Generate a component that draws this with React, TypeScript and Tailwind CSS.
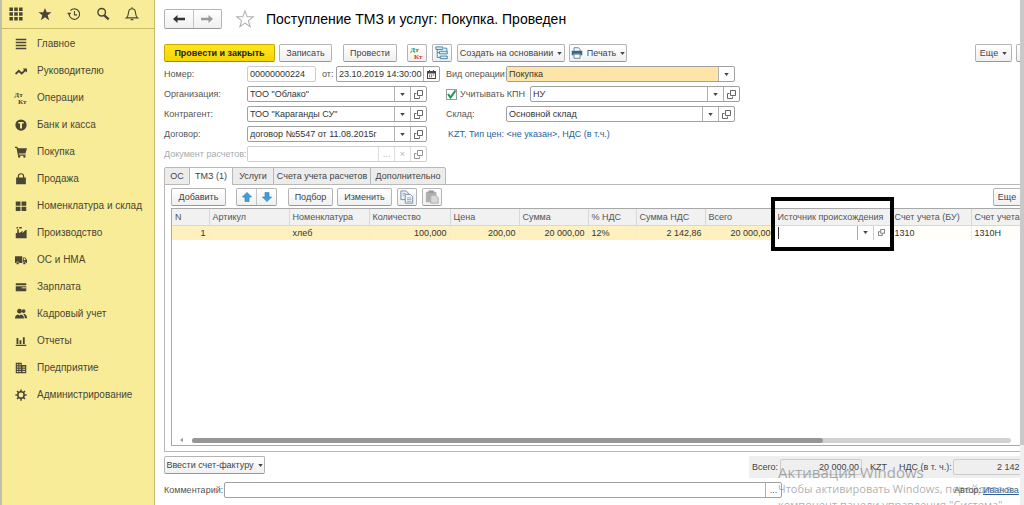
import React from 'react';

type Kids = { children?: React.ReactNode };

const Svg = ({ children, className = 'size-3.5', box = 16 }: Kids & { className?: string; box?: number }) => (
  <svg viewBox={`0 0 ${box} ${box}`} className={`shrink-0 overflow-visible ${className}`} fill="currentColor" aria-hidden="true">
    {children}
  </svg>
);

const DtKt = ({ colored = false, className = 'size-3.5' }: { colored?: boolean; className?: string }) => (
  <Svg className={className}>
    <text x="-1" y="7" fontSize="9.500" fontWeight="bold" fontFamily="Liberation Serif, serif" fill={colored ? '#2b8a2b' : 'currentColor'}>Дт</text>
    <text x="4" y="15.500" fontSize="9.500" fontWeight="bold" fontFamily="Liberation Serif, serif" fill={colored ? '#d83a34' : 'currentColor'}>Кт</text>
  </Svg>
);

const sections: { label: string; icon: React.ReactNode }[] = [
  { label: 'Главное', icon: <Svg className="size-3"><path d="M1 1h14v2H1zM1 5h14v2H1zM1 9h14v2H1zM1 13h14v2H1z" /></Svg> },
  { label: 'Руководителю', icon: <Svg className="size-3"><path d="M0 11l5-5 4 3.500 3-3L10.500 4.500H16V10l-2-1.700L9 13 5 9.500 1.500 13z" /></Svg> },
  { label: 'Операции', icon: <DtKt className="size-3" /> },
  { label: 'Банк и касса', icon: <Svg className="size-3"><circle cx="8" cy="8" r="7.500" /><path d="M4.500 4h7v2H9.300v6.500H6.700V6H4.500z" fill="#f9ec98" /></Svg> },
  { label: 'Покупка', icon: <Svg className="size-3"><path d="M0 1h3l1 2h12l-2 7H5l.4 1.300H14V13H4L2 2.500H0z" /><circle cx="5.500" cy="14.300" r="1.500" /><circle cx="12.500" cy="14.300" r="1.500" /></Svg> },
  { label: 'Продажа', icon: <Svg className="size-3"><path d="M1.500 6h13v9h-13z" /><path d="M4.500 8V4.500a3.500 3.500 0 0 1 7 0V8" fill="none" stroke="currentColor" strokeWidth="1.500" /></Svg> },
  { label: 'Номенклатура и склад', icon: <Svg className="size-3"><path d="M1 2h6.300v5.500H1zM8.700 2H15v5.500H8.700zM1 9h6.300v5.500H1zM8.700 9H15v5.500H8.700z" /></Svg> },
  { label: 'Производство', icon: <Svg className="size-3"><path d="M1 15V8h2V3h2v3.500l1 1.500 4-3v3l4-4 1.500 0V15zM2 0h2v2H2zM5.500 0H9v2H5.500z" /></Svg> },
  { label: 'ОС и НМА', icon: <Svg className="size-3"><path d="M0 3h9.500v9H0zM10.300 4.500h3.500L16 8v4h-5.700z" /><path d="M11.500 5.700h1.700L14.500 8h-3z" fill="#f9ec98" /><circle cx="3.500" cy="12.200" r="1.900" stroke="#f9ec98" strokeWidth=".7" /><circle cx="12.500" cy="12.200" r="1.900" stroke="#f9ec98" strokeWidth=".7" /></Svg> },
  { label: 'Зарплата', icon: <Svg className="size-3"><path d="M1 3h14v2.500H1zM1 7h14v6.500H1z" /><path d="M9 8.500h6v1.200H9z" fill="#f9ec98" /></Svg> },
  { label: 'Кадровый учет', icon: <Svg className="size-3"><circle cx="6" cy="4.200" r="3.200" /><path d="M0 14c0-4 2-5 4-5.500l2 1.500 2-1.500c2 .5 4 1.500 4 5.500z" /><circle cx="11.500" cy="4" r="2.500" /><path d="M10.500 7.500c4 0 5.500 2 5.500 6h-3c0-3-1-4.500-2.500-6z" /></Svg> },
  { label: 'Отчеты', icon: <Svg className="size-3"><path d="M1 13h14v1.500H1zM2 4h2.500v8H2zM6 7h2.500v5H6zM10.500 3H13v9h-2.500z" /></Svg> },
  { label: 'Предприятие', icon: <Svg className="size-3"><path fillRule="evenodd" d="M1 1h8v3h6v11H1zM2.500 3v1.200h2V3zm3.200 0v1.200h2V3zM2.500 6v1.200h2V6zm3.200 0v1.200h2V6zM2.500 9v1.200h2V9zm3.200 0v1.200h2V9zM2.500 12v1.200h2V12zm3.200 0v1.200h2V12zM10 6v1.200h3.500V6zm0 3v1.200h3.500V9zm0 3v1.200h3.500V12z" /></Svg> },
  {
    label: 'Администрирование',
    icon: (
      <Svg className="size-3">
        <circle cx="8" cy="8" r="4.200" fill="none" stroke="currentColor" strokeWidth="2" />
        <path d="M8 .5v3M8 12.500v3M.5 8h3M12.500 8h3M2.700 2.700l2 2M11.300 11.300l2 2M2.700 13.300l2-2M11.300 4.700l2-2" stroke="currentColor" strokeWidth="2" />
      </Svg>
    ),
  },
];

const Caret = () => (
  <svg viewBox="0 0 6 4" className="h-[3px] w-[5px] shrink-0" fill="#444" aria-hidden="true"><path d="M0 0h6L3 4z" /></svg>
);

const OpenIcon = () => (
  <svg viewBox="0 0 9 9" className="size-[9px] shrink-0" fill="none" stroke="#666" aria-hidden="true">
    <path d="M3.500 .5h5v5h-5zM2.500 3.500h-2v5h5v-2" />
  </svg>
);

const Btn = ({ children, className = '', label }: Kids & { className?: string; label?: string }) => (
  <button
    type="button"
    aria-label={label}
    className={`flex h-[18px] shrink-0 items-center justify-center gap-1 whitespace-nowrap rounded-[2px] border border-[#b4b4b4] border-b-[#989898] bg-linear-to-b from-white to-[#f0f0f0] text-[#444] ${className}`}
  >
    {children}
  </button>
);

type FieldProps = {
  id: string;
  value: string;
  className?: string;
  inputClass?: string;
  tools?: ('drop' | 'open' | 'dots' | 'clear' | 'calendar')[];
  muted?: boolean;
  label?: string;
};

const toolNames = { drop: 'Выбрать из списка', open: 'Открыть', dots: 'Выбрать', clear: 'Очистить', calendar: 'Календарь' };

const Field = ({ id, value, className = '', inputClass = '', tools = [], muted, label }: FieldProps) => (
  <div className={`flex h-4 overflow-hidden rounded-[2px] border bg-white ${muted ? 'border-[#d0d0d0]' : 'border-[#a0a0a0]'} ${className}`}>
    <input id={id} aria-label={label} defaultValue={value} disabled={muted} className={`min-w-0 flex-1 pl-0.5 text-[#333] outline-none ${inputClass}`} />
    {tools.map((t) => (
      <button
        key={t}
        type="button"
        aria-label={toolNames[t]}
        className={`flex w-4 shrink-0 items-center justify-center border-l ${muted ? 'border-[#d0d0d0] text-[#999] opacity-70' : 'border-[#b0b0b0] text-[#555]'}`}
      >
        {t === 'drop' && <Caret />}
        {t === 'open' && <OpenIcon />}
        {t === 'dots' && '...'}
        {t === 'clear' && '×'}
        {t === 'calendar' && (
          <svg viewBox="0 0 9 9" className="size-[9px]" fill="#444" aria-hidden="true">
            <path fillRule="evenodd" d="M0 1h2V0h1v1h3V0h1v1h2v8H0zM1 3.500V8h7V3.500z" />
            <path d="M2 4.500h1.200v1H2zM4 4.500h1.200v1H4zM6 4.500h1.200v1H6zM2 6.300h1.200v1H2zM4 6.300h1.200v1H4z" />
          </svg>
        )}
      </button>
    ))}
  </div>
);

const Row = ({ id, label, muted, children }: Kids & { id: string; label: string; muted?: boolean }) => (
  <div className="flex h-4 items-center">
    <label htmlFor={id} className={`w-[83px] shrink-0 whitespace-nowrap ${muted ? 'text-[#aaa]' : ''}`}>{label}</label>
    {children}
  </div>
);

const columns: { name: string; value: string; width: string; right?: boolean }[] = [
  { name: 'N', value: '1', width: 'w-[37px]', right: true },
  { name: 'Артикул', value: '', width: 'w-20' },
  { name: 'Номенклатура', value: 'хлеб', width: 'w-20' },
  { name: 'Количество', value: '100,000', width: 'w-[81px]', right: true },
  { name: 'Цена', value: '200,00', width: 'w-[69px]', right: true },
  { name: 'Сумма', value: '20 000,00', width: 'w-[69px]', right: true },
  { name: '% НДС', value: '12%', width: 'w-12' },
  { name: 'Сумма НДС', value: '2 142,86', width: 'w-[69px]', right: true },
  { name: 'Всего', value: '20 000,00', width: 'w-[69px]', right: true },
  { name: 'Источник происхождения', value: '', width: 'w-[117px]' },
  { name: 'Счет учета (БУ)', value: '1310', width: 'w-20' },
  { name: 'Счет учета (НУ)', value: '1310Н', width: 'w-20' },
];

const tabs = [
  { name: 'ОС', width: 'w-6' },
  { name: 'ТМЗ (1)', width: 'w-[42px]', active: true },
  { name: 'Услуги', width: 'w-10' },
  { name: 'Счета учета расчетов', width: 'w-24' },
  { name: 'Дополнительно', width: 'w-[74px]' },
];

const Sidebar = () => (
  <aside className="w-[155px] shrink-0 border-r border-l-2 border-r-[#c9bd70] border-l-[#bfc0a8] bg-[#f9ec98] text-[#4a4636]">
    <div className="flex h-[29px] items-center gap-[15px] border-b border-[#cbbb66] pb-px pl-[7px]">
      <button type="button" aria-label="Меню"><Svg><path d="M.5 .5h4v4h-4zM6 .5h4v4H6zM11.500 .5h4v4h-4zM.5 6h4v4h-4zM6 6h4v4H6zM11.500 6h4v4h-4zM.5 11.500h4v4h-4zM6 11.500h4v4H6zM11.500 11.500h4v4h-4z" /></Svg></button>
      <button type="button" aria-label="Избранное"><Svg><path d="M8 1l2 5h5.500l-4.400 3.400L12.700 15 8 11.700 3.300 15l1.600-5.600L.5 6H6z" /></Svg></button>
      <button type="button" aria-label="История">
        <Svg><path d="M2.500 9A6 6 0 1 0 4 4" fill="none" stroke="currentColor" strokeWidth="1.300" /><path d="M0 6.500h5L2.500 9.800z" /><path d="M8.500 4.500V9h3" fill="none" stroke="currentColor" strokeWidth="1.200" /></Svg>
      </button>
      <button type="button" aria-label="Поиск"><Svg><circle cx="6.500" cy="6" r="4.300" fill="none" stroke="currentColor" strokeWidth="1.600" /><path d="M9.500 9.500l5 4.700" stroke="currentColor" strokeWidth="2.600" /></Svg></button>
      <button type="button" aria-label="Уведомления"><Svg><path d="M1.500 12.500c2-1.500 2.300-3.500 2.500-6 .2-2.700 1.700-4.500 4-4.500s3.800 1.800 4 4.500c.2 2.500.5 4.500 2.500 6zM8 .3V2M6.500 14.500h3" fill="none" stroke="currentColor" strokeWidth="1.300" /></Svg></button>
    </div>
    <nav className="pt-px text-[10px]">
      {sections.map((s) => (
        <a key={s.label} href="#" className="flex h-[27px] items-center gap-2.5 whitespace-nowrap pl-[13px]">
          {s.icon}
          {s.label}
        </a>
      ))}
    </nav>
  </aside>
);

const Arrow = ({ className }: { className: string }) => (
  <svg viewBox="0 0 12 8" className={`h-2 w-3 ${className}`} fill="currentColor" aria-hidden="true"><path d="M4.500 0L0 4l4.500 4V5.200H12V2.800H4.500z" /></svg>
);

const BlueArrow = ({ down = false }: { down?: boolean }) => (
  <svg viewBox="0 0 10 10" className={`size-2.5 ${down ? 'rotate-180' : ''}`} fill="#3f9fd8" stroke="#2479b0" strokeWidth=".6" aria-hidden="true"><path d="M5 .4L9.600 5H7v4.600H3V5H.4z" /></svg>
);

export default function App() {
  return (
    <div className="relative flex h-screen overflow-hidden bg-white font-['Liberation_Sans',sans-serif] text-[9px] leading-3 text-[#555]">
      <Sidebar />
      <main className="flex min-w-0 flex-1 flex-col overflow-hidden pl-[9px]">
        <header className="flex shrink-0 items-center pt-2">
          <div className="flex h-5 w-[58px] shrink-0 rounded-[2px] border border-[#b4b4b4] border-b-[#989898] bg-linear-to-b from-white to-[#f0f0f0]">
            <button type="button" aria-label="Назад" className="flex flex-1 items-center justify-center border-r border-[#c4c4c4]"><Arrow className="text-[#333]" /></button>
            <button type="button" aria-label="Вперед" className="flex flex-1 items-center justify-center"><Arrow className="rotate-180 text-[#999]" /></button>
          </div>
          <button type="button" aria-label="В избранное" className="ml-3.5">
            <Svg className="size-[18px]"><path d="M8 .8l1.900 5.200h5.500l-4.400 3.400 1.600 5.500L8 11.600l-4.600 3.300L5 9.400.6 6h5.500z" fill="none" stroke="#b0b0b0" strokeWidth=".9" /></Svg>
          </button>
          <h1 className="ml-3 whitespace-nowrap text-[14px] leading-[22px] text-black">Поступление ТМЗ и услуг: Покупка. Проведен</h1>
        </header>

        <div className="mt-3.5 flex shrink-0 items-center">
          <button type="button" className="h-[18px] w-[111px] shrink-0 whitespace-nowrap rounded-[2px] border border-[#c9a900] border-b-[#a08600] bg-linear-to-b from-[#ffe51f] to-[#f6d500] font-bold text-[#222]">Провести и закрыть</button>
          <Btn className="ml-1 w-[53px]">Записать</Btn>
          <Btn className="ml-[11px] w-[54px]">Провести</Btn>
          <Btn className="ml-2.5 w-5" label="Дебет и кредит"><DtKt colored className="size-3" /></Btn>
          <Btn className="ml-[5px] w-5" label="Структура подчиненности">
            <Svg><path d="M1 1h8v3H1zM5 6h9v3H5zM6 11.500h8v3H6z" fill="#d5e9f5" stroke="#3b7d9f" /><path d="M2.500 4v9H6M2.500 7.500H5M10 2.500h3.500V6" fill="none" stroke="#3b7d9f" /></Svg>
          </Btn>
          <Btn className="ml-[5px] w-[108px]">Создать на основании <Caret /></Btn>
          <Btn className="ml-1 w-[58px]">
            <Svg className="size-3"><path d="M4 5V1h6l2 2v2" fill="white" stroke="#3f607a" /><path d="M1 5h14v6h-2.500V9h-9v2H1z" fill="#33678d" /><path d="M4 9.500h8V15H4z" fill="white" stroke="#3f607a" /></Svg>
            Печать <Caret />
          </Btn>
          <Btn className="ml-auto w-[37px]">Еще <Caret /></Btn>
          <Btn className="-mr-4 ml-1 w-5" label="Справка" />
        </div>

        <form className="mt-1 flex shrink-0">
          <div className="flex w-[282px] shrink-0 flex-col gap-1">
            <Row id="number" label="Номер:">
              <Field id="number" value="00000000224" className="w-[69px] border-[#ccc]" />
              <label htmlFor="date" className="ml-1.5 w-3.5">от:</label>
              <Field id="date" value="23.10.2019 14:30:00" className="w-[104px]" tools={['calendar']} />
            </Row>
            <Row id="org" label="Организация:"><Field id="org" value={'ТОО "Облако"'} className="w-[180px]" tools={['drop', 'open']} /></Row>
            <Row id="partner" label="Контрагент:"><Field id="partner" value={'ТОО "Караганды СУ"'} className="w-[180px]" tools={['drop', 'open']} /></Row>
            <Row id="contract" label="Договор:"><Field id="contract" value="договор №5547 от 11.08.2015г" className="w-[180px]" tools={['drop', 'open']} /></Row>
            <Row id="settle" label="Документ расчетов:" muted><Field id="settle" value="" className="w-[180px]" tools={['dots', 'clear', 'open']} muted /></Row>
          </div>
          <div className="flex w-[294px] flex-col gap-1">
            <div className="flex h-4 items-center">
              <label htmlFor="kind" className="w-[60px] whitespace-nowrap">Вид операции:</label>
              <Field id="kind" value="Покупка" className="w-[229px]" inputClass="bg-[#ffe4a8]" tools={['drop']} />
            </div>
            <div className="flex h-4 items-center">
              <span className="relative flex size-[11px] shrink-0">
                <input id="kpn" type="checkbox" defaultChecked className="size-[11px] appearance-none border border-[#999] bg-white" />
                <svg viewBox="0 0 11 11" className="pointer-events-none absolute inset-0 size-[11px]" fill="none" stroke="#149a50" strokeWidth="2" aria-hidden="true"><path d="M2 5l2.500 3.500L9.500 1.500" /></svg>
              </span>
              <label htmlFor="kpn" className="ml-[3px] w-[70px] whitespace-nowrap">Учитывать КПН</label>
              <Field id="nu" label="КПН" value="НУ" className="w-[210px]" tools={['drop', 'open']} />
            </div>
            <div className="flex h-4 items-center">
              <label htmlFor="store" className="w-[60px]">Склад:</label>
              <Field id="store" value="Основной склад" className="w-[229px]" tools={['drop', 'open']} />
            </div>
            <a href="#" className="flex h-4 items-center whitespace-nowrap pl-0.5 text-[#2c6396]">KZT, Тип цен: &lt;не указан&gt;, НДС (в т.ч.)</a>
          </div>
        </form>

        <div role="tablist" className="relative z-10 mt-[5px] -mb-px flex h-[18px] shrink-0">
          {tabs.map((t) => (
            <button
              key={t.name}
              type="button"
              role="tab"
              aria-selected={!!t.active}
              className={`-mr-px box-content h-4 shrink-0 whitespace-nowrap border border-[#b8b8b8] text-[#444] first:rounded-tl-[2px] last:rounded-tr-[2px] ${t.active ? 'border-b-white bg-white' : 'bg-[#ececec]'} ${t.width}`}
            >
              {t.name}
            </button>
          ))}
        </div>

        <section className="flex min-h-0 flex-1 flex-col border-t border-b border-l border-[#b8b8b8] pt-[3px] pb-[5px] pl-1.5">
          <div className="flex shrink-0 items-center">
            <Btn className="w-[55px]">Добавить</Btn>
            <div className="ml-2.5 flex h-[18px] w-[41px] shrink-0 rounded-[2px] border border-[#b4b4b4] border-b-[#989898] bg-linear-to-b from-white to-[#f0f0f0]">
              <button type="button" aria-label="Вверх" className="flex flex-1 items-center justify-center border-r border-[#c4c4c4]"><BlueArrow /></button>
              <button type="button" aria-label="Вниз" className="flex flex-1 items-center justify-center"><BlueArrow down /></button>
            </div>
            <Btn className="ml-[11px] w-[45px]">Подбор</Btn>
            <Btn className="ml-1 w-[55px]">Изменить</Btn>
            <Btn className="ml-[5px] w-5" label="Копировать">
              <Svg><path d="M1 1h6l2.500 2.500V11H1z" fill="#e8eff5" stroke="#70859a" /><path d="M6 5h6l2.500 2.500V15H6z" fill="#f4f8fb" stroke="#70859a" /><path d="M8 9h5M8 11h5M8 13h5M3 4h3M3 6h2" stroke="#8da2b5" /></Svg>
            </Btn>
            <Btn className="ml-[5px] w-5" label="Вставить">
              <Svg><path d="M1 2h12v12H1z" fill="#b0b0b0" /><path d="M4 .5h6v3H4z" fill="#999" /><path d="M6.500 6h6L15 8.500V15H6.500z" fill="#d8d8d8" stroke="#aaa" /></Svg>
            </Btn>
            <Btn className="-mr-2.5 ml-auto w-[37px]">Еще <Caret /></Btn>
          </div>

          <div className="relative mt-0.5 flex min-h-0 flex-1 flex-col border-t border-b border-l border-[#a8a8a8]">
            <div className="min-h-0 flex-1 overflow-hidden">
              <table className="w-[879px] table-fixed border-collapse">
                <thead>
                  <tr className="h-4 bg-[#f1f1f1] text-left">
                    {columns.map((c) => (
                      <th key={c.name} className={`whitespace-nowrap border-r border-b border-[#d8d8d8] p-0 pl-[3px] font-normal ${c.width}`}>{c.name}</th>
                    ))}
                  </tr>
                </thead>
                <tbody>
                  <tr className="h-[15px] text-[#333]">
                    {columns.map((c, i) => (
                      <td
                        key={c.name}
                        className={`whitespace-nowrap border-r border-[#f8edc8] p-0 ${i < 9 ? 'bg-[#fff0c0]' : i === 9 ? 'bg-white' : 'bg-[#fffef8]'} ${c.right ? 'pr-[3px] text-right' : 'pl-[3px]'}`}
                      >
                        {i === 9 ? (
                          <div className="flex h-3.5 pr-0.5">
                            <span className="my-px w-px shrink-0 bg-[#333]" />
                            <input aria-label={c.name} className="min-w-0 flex-1 outline-none" />
                            <button type="button" aria-label="Выбрать из списка" className="flex w-4 shrink-0 items-center justify-center border-l border-[#aaa]"><Caret /></button>
                            <button type="button" aria-label="Открыть" className="flex w-4 shrink-0 items-center justify-center border-l border-[#ccc]">
                              <svg viewBox="0 0 9 9" className="size-[7px]" fill="none" stroke="#555" aria-hidden="true"><path d="M3.500 .5h5v5h-5zM2.500 3.500h-2v5h5v-2" /></svg>
                            </button>
                          </div>
                        ) : (
                          c.value
                        )}
                      </td>
                    ))}
                  </tr>
                </tbody>
              </table>
            </div>
            <div className="flex h-2.5 shrink-0 items-center gap-[9px] pl-2">
              <svg viewBox="0 0 3 4" className="h-1 w-[3px]" fill="#999" aria-hidden="true"><path d="M3 0v4L0 2z" /></svg>
              <div className="mr-[9px] h-[5px] flex-1 rounded-full bg-[#d2d2d2]"><div className="h-full w-[77%] rounded-full bg-[#969696]" /></div>
            </div>
            <div className="pointer-events-none absolute -top-3 left-[599px] h-[54px] w-[123px] border-4 border-black" />
          </div>
        </section>

        <div className="mt-1 flex h-[22px] shrink-0 items-start">
          <Btn className="w-[101px]">Ввести счет-фактуру <Caret /></Btn>
          <div className="ml-auto flex h-[22px] w-[271px] items-center overflow-hidden bg-[#efefef] pl-[3px] text-[#444]">
            <label htmlFor="total" className="w-7 shrink-0">Всего:</label>
            <input id="total" readOnly defaultValue="20 000,00" className="h-4 w-[82px] shrink-0 rounded-[2px] border border-[#ccc] px-0.5 text-right" />
            <span className="ml-2 w-[29px] shrink-0">KZT</span>
            <label htmlFor="vat" className="w-[54px] shrink-0 whitespace-nowrap">НДС (в т. ч.):</label>
            <input id="vat" readOnly defaultValue="2 142,86" className="h-4 w-[82px] shrink-0 rounded-[2px] border border-[#ccc] px-0.5 text-right" />
          </div>
        </div>

        <footer className="mt-1 mb-[7px] flex h-4 shrink-0 items-center">
          <label htmlFor="comment" className="w-[60px] shrink-0">Комментарий:</label>
          <Field id="comment" value="" className="max-w-[558px] flex-1" tools={['dots']} />
          <span className="mr-0.5 ml-auto text-[#444]">Автор:</span>
          <a href="#" className="w-[37px] shrink-0 text-[#2c6396] underline">Иванова</a>
        </footer>
      </main>

      <div className="flex w-1 shrink-0 flex-col bg-[#efefef]"><div className="h-[445px] bg-[#c9c9c9]" /></div>

      <div className="pointer-events-none absolute right-[13px] -bottom-2 w-[233px] whitespace-nowrap font-['Open_Sans',sans-serif] text-[11px] leading-4 text-[#777]/60">
        <p className="text-[15px] leading-[18px]">Активация Windows</p>
        <p>Чтобы активировать Windows, перейдите в</p>
        <p>компонент панели управления "Система"</p>
      </div>
    </div>
  );
}
